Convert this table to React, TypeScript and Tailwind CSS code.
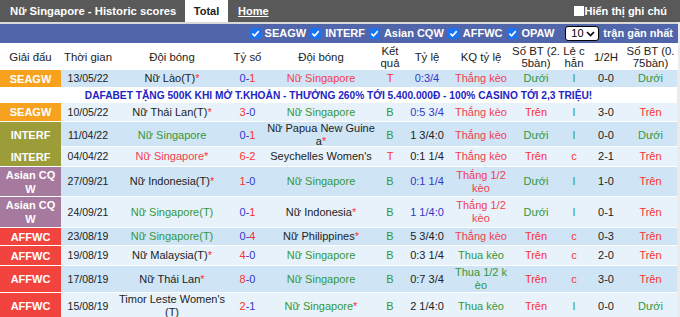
import React from 'react'

// column template shared by header and rows
const cols = 'grid grid-cols-[61px_54px_114px_37px_110px_28px_46px_62px_48px_28px_36px_53px]'

const red = 'text-[#ff3030]'
const pink = 'text-[#f2404e]'
const green = 'text-[#35963a]'
const blue = 'text-[#3636c8]'
const dark = 'text-[#222222]'

const Star = () => <span className="text-[#ff3030]">*</span>

type Row = {
  league: React.ReactNode
  lc: string
  date: string
  home: React.ReactNode
  score: React.ReactNode
  away: React.ReactNode
  res: 'T' | 'B'
  hcp: string
  hcpBlue?: boolean
  kq: React.ReactNode
  kqWin: boolean
  bt: string
  oe: string
  half: string
  bt2: string
  h: string
  even: boolean
}

const Score = ({ a, b, win }: { a: string; b: string; win: 'a' | 'b' | 'both' }) => (
  <>
    <span className={win === 'b' ? blue : red}>{a}</span>
    <span className={win === 'both' ? red : blue}>-</span>
    <span className={win === 'a' ? blue : red}>{b}</span>
  </>
)

const rows: Row[] = [
  {
    league: 'SEAGW', lc: 'bg-[#f6a21e]', date: '13/05/22',
    home: <span className={dark}>Nữ Lào(T)<Star /></span>,
    score: <Score a="0" b="1" win="b" />,
    away: <span className={pink}>Nữ Singapore</span>,
    res: 'T', hcp: '0:3/4', hcpBlue: true, kq: 'Thắng kèo', kqWin: true,
    bt: 'Dưới', oe: 'l', half: '0-0', bt2: 'Dưới', h: 'h-[18px]', even: false,
  },
  {
    league: 'SEAGW', lc: 'bg-[#f6a21e]', date: '10/05/22',
    home: <span className={dark}>Nữ Thái Lan(T)<Star /></span>,
    score: <Score a="3" b="0" win="a" />,
    away: <span className={green}>Nữ Singapore</span>,
    res: 'B', hcp: '0:5 3/4', hcpBlue: true, kq: 'Thắng kèo', kqWin: true,
    bt: 'Trên', oe: 'l', half: '3-0', bt2: 'Trên', h: 'h-[19px]', even: true,
  },
  {
    league: 'INTERF', lc: 'bg-[#9c9c38]', date: '11/04/22',
    home: <span className={green}>Nữ Singapore</span>,
    score: <Score a="0" b="1" win="b" />,
    away: <span className={dark}>Nữ Papua New Guine<br />a<Star /></span>,
    res: 'B', hcp: '1 3/4:0', kq: 'Thắng kèo', kqWin: true,
    bt: 'Dưới', oe: 'l', half: '0-0', bt2: 'Dưới', h: 'h-[25px]', even: false,
  },
  {
    league: 'INTERF', lc: 'bg-[#9c9c38]', date: '04/04/22',
    home: <span className={pink}>Nữ Singapore<Star /></span>,
    score: <Score a="6" b="2" win="both" />,
    away: <span className={dark}>Seychelles Women's</span>,
    res: 'T', hcp: '0:1 1/4', kq: 'Thắng kèo', kqWin: true,
    bt: 'Trên', oe: 'c', half: '2-1', bt2: 'Trên', h: 'h-[20px]', even: true,
  },
  {
    league: <>Asian CQ<br />W</>, lc: 'bg-[#a6799e]', date: '27/09/21',
    home: <span className={dark}>Nữ Indonesia(T)<Star /></span>,
    score: <Score a="1" b="0" win="a" />,
    away: <span className={green}>Nữ Singapore</span>,
    res: 'B', hcp: '0:1 1/4', hcpBlue: true, kq: <>Thắng 1/2<br />kèo</>, kqWin: true,
    bt: 'Dưới', oe: 'l', half: '1-0', bt2: 'Trên', h: 'h-[30px]', even: false,
  },
  {
    league: <>Asian CQ<br />W</>, lc: 'bg-[#a6799e]', date: '24/09/21',
    home: <span className={green}>Nữ Singapore(T)</span>,
    score: <Score a="0" b="1" win="b" />,
    away: <span className={dark}>Nữ Indonesia<Star /></span>,
    res: 'B', hcp: '1 1/4:0', hcpBlue: true, kq: <>Thắng 1/2<br />kèo</>, kqWin: true,
    bt: 'Dưới', oe: 'l', half: '0-1', bt2: 'Trên', h: 'h-[31px]', even: true,
  },
  {
    league: 'AFFWC', lc: 'bg-[#f2443f]', date: '23/08/19',
    home: <span className={green}>Nữ Singapore(T)</span>,
    score: <Score a="0" b="4" win="b" />,
    away: <span className={dark}>Nữ Philippines<Star /></span>,
    res: 'B', hcp: '5 3/4:0', kq: 'Thắng kèo', kqWin: true,
    bt: 'Trên', oe: 'c', half: '0-3', bt2: 'Trên', h: 'h-[18px]', even: false,
  },
  {
    league: 'AFFWC', lc: 'bg-[#f2443f]', date: '19/08/19',
    home: <span className={dark}>Nữ Malaysia(T)<Star /></span>,
    score: <Score a="4" b="0" win="a" />,
    away: <span className={green}>Nữ Singapore</span>,
    res: 'B', hcp: '0:3 1/4', kq: 'Thua kèo', kqWin: false,
    bt: 'Trên', oe: 'c', half: '2-0', bt2: 'Trên', h: 'h-[20px]', even: true,
  },
  {
    league: 'AFFWC', lc: 'bg-[#f2443f]', date: '17/08/19',
    home: <span className={dark}>Nữ Thái Lan<Star /></span>,
    score: <Score a="8" b="0" win="a" />,
    away: <span className={green}>Nữ Singapore</span>,
    res: 'B', hcp: '0:7 3/4', kq: <>Thua 1/2 k<br />èo</>, kqWin: false,
    bt: 'Trên', oe: 'c', half: '3-0', bt2: 'Trên', h: 'h-[27px]', even: false,
  },
  {
    league: 'AFFWC', lc: 'bg-[#f2443f]', date: '15/08/19',
    home: <span className={dark}>Timor Leste Women's<br />(T)</span>,
    score: <Score a="2" b="1" win="a" />,
    away: <span className={green}>Nữ Singapore<Star /></span>,
    res: 'B', hcp: '2 1/4:0', kq: 'Thua kèo', kqWin: false,
    bt: 'Trên', oe: 'l', half: '0-0', bt2: 'Dưới', h: 'h-[26px]', even: true,
  },
]

const Check = () => (
  <span className="w-[11px] h-[11px] rounded-[2px] bg-[#1a73f0] flex items-center justify-center">
    <svg width="9" height="9" viewBox="0 0 10 10">
      <path d="M1.5 5.2 L4 7.6 L8.6 2.4" stroke="white" strokeWidth="1.8" fill="none" />
    </svg>
  </span>
)

const Filter = ({ label }: { label: string }) => (
  <div className="flex items-center gap-[4px] mr-[4px]">
    <Check />
    <span>{label}</span>
  </div>
)

const Cell = ({ className = '', children }: { className?: string; children: React.ReactNode }) => (
  <div className={`flex items-center justify-center whitespace-nowrap ${className}`}>{children}</div>
)

const DataRow = ({ r }: { r: Row }) => {
  const tone = (v: string) => (v === 'Dưới' || v === 'l' ? green : red)
  return (
    <div className={`${cols} ${r.h} border-b border-white text-[11px] leading-[13px] text-center ${r.even ? 'bg-[#e7f2fb]' : 'bg-[#cfe5f6]'}`}>
      <Cell className={`${r.lc} text-white font-bold leading-[14px]`}>{r.league}</Cell>
      <Cell className={`text-[10.5px] ${dark}`}>{r.date}</Cell>
      <Cell>{r.home}</Cell>
      <Cell>{r.score}</Cell>
      <Cell>{r.away}</Cell>
      <Cell className={r.res === 'T' ? red : green}>{r.res}</Cell>
      <Cell className={r.hcpBlue ? blue : dark}>{r.hcp}</Cell>
      <Cell className={r.kqWin ? pink : green}>{r.kq}</Cell>
      <Cell className={tone(r.bt)}>{r.bt}</Cell>
      <Cell className={tone(r.oe)}>{r.oe}</Cell>
      <Cell className={dark}>{r.half}</Cell>
      <Cell className={tone(r.bt2)}>{r.bt2}</Cell>
    </div>
  )
}

export default function App() {
  return (
    <div className="w-[680px] h-[317px] overflow-hidden bg-[#ebebeb] font-['Liberation_Sans',Arial,sans-serif]">
      {/* tabs bar */}
      <div className="flex h-[22px] bg-[#595959] text-[11px] font-bold">
        <div className="w-[185px] pl-[10px] flex items-center text-white text-[11.3px]">Nữ Singapore - Historic scores</div>
        <div className="w-[43px] bg-white flex items-center justify-center text-[#222]">Total</div>
        <div className="pl-[10px] flex items-center text-white underline">Home</div>
        <div className="ml-auto pr-[13px] flex items-center text-white gap-[1px]">
          <span className="w-[10px] h-[10px] bg-white" />
          <span>Hiển thị ghi chú</span>
        </div>
      </div>
      <div className="w-[678px] h-[2px] bg-[#d9d9d9]" />

      {/* filters */}
      <div className="w-[678px] h-[19px] bg-[#5165aa] flex items-center justify-end pr-[5px] text-white text-[11px] font-bold">
        <Filter label="SEAGW" />
        <Filter label="INTERF" />
        <Filter label="Asian CQW" />
        <Filter label="AFFWC" />
        <Filter label="OPAW" />
        <div className="ml-[7px] mr-[4px] w-[34px] h-[15px] bg-white border-[1.5px] border-black rounded-[3px] flex items-center justify-between pl-[5px] pr-[3px] text-black font-normal text-[11px]">
          <span>10</span>
          <svg width="9" height="6" viewBox="0 0 9 6">
            <path d="M1 1 L4.5 4.5 L8 1" stroke="black" strokeWidth="1.6" fill="none" />
          </svg>
        </div>
        <span>trận gần nhất</span>
      </div>

      {/* header */}
      <div className={`${cols} w-[678px] h-[27px] bg-white text-[11.4px] leading-[12px] text-[#222] text-center`}>
        <Cell>Giải đấu</Cell>
        <Cell>Thời gian</Cell>
        <Cell>Đội bóng</Cell>
        <Cell>Tỷ số</Cell>
        <Cell>Đội bóng</Cell>
        <Cell>Kết<br />quả</Cell>
        <Cell>Tỷ lệ</Cell>
        <Cell>KQ tỷ lệ</Cell>
        <Cell>Số BT (2.<br />5bàn)</Cell>
        <Cell>Lẻ c<br />hẵn</Cell>
        <Cell>1/2H</Cell>
        <Cell>Số BT (0.<br />75bàn)</Cell>
      </div>

      <div className="w-[677px]">
        <DataRow r={rows[0]} />
        <div className="h-[15px] bg-white flex items-center justify-center text-[#2323c4] font-bold text-[10.2px] whitespace-nowrap">
          DAFABET TẶNG 500K KHI MỞ T.KHOẢN - THƯỞNG 260% TỚI 5.400.000Đ - 100% CASINO TỚI 2,3 TRIỆU!
        </div>
        {rows.slice(1).map((r, i) => (
          <DataRow key={i} r={r} />
        ))}
      </div>
    </div>
  )
}
